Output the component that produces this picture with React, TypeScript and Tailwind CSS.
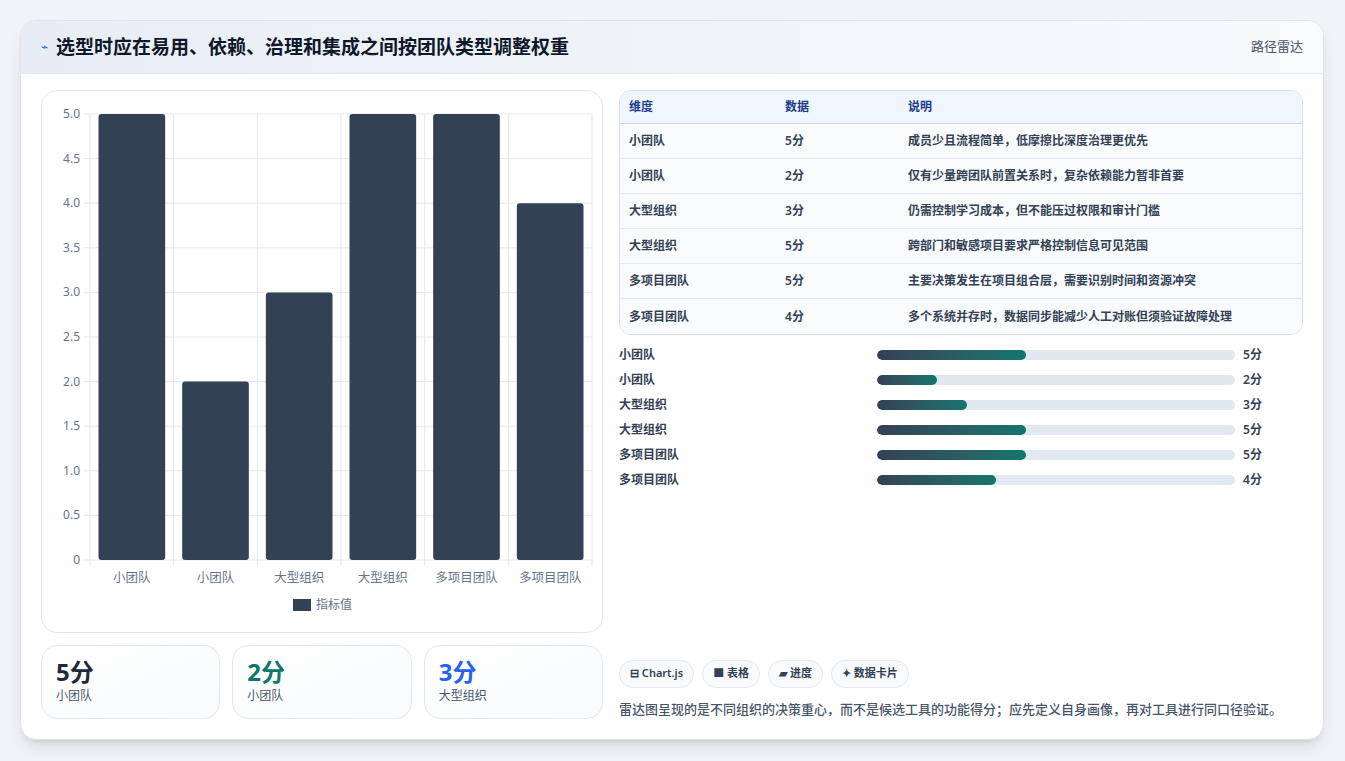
const rows = [
  { k: "小团队", v: 5, d: "成员少且流程简单，低摩擦比深度治理更优先" },
  { k: "小团队", v: 2, d: "仅有少量跨团队前置关系时，复杂依赖能力暂非首要" },
  { k: "大型组织", v: 3, d: "仍需控制学习成本，但不能压过权限和审计门槛" },
  { k: "大型组织", v: 5, d: "跨部门和敏感项目要求严格控制信息可见范围" },
  { k: "多项目团队", v: 5, d: "主要决策发生在项目组合层，需要识别时间和资源冲突" },
  { k: "多项目团队", v: 4, d: "多个系统并存时，数据同步能减少人工对账但须验证故障处理" },
];

function BarChart() {
  const x0 = 48, x1 = 550, y0 = 23, y1 = 469;
  const step = (x1 - x0) / 6;
  const ticks = [0, 0.5, 1, 1.5, 2, 2.5, 3, 3.5, 4, 4.5, 5];
  const yOf = (v: number) => y1 - ((y1 - y0) * v) / 5;
  return (
    <svg width="562" height="543" className="block">
      {ticks.map((t) => (
        <g key={t}>
          <line x1={x0 - 6} x2={x1} y1={yOf(t)} y2={yOf(t)} stroke="#e5e7eb" />
          <text x={x0 - 10} y={yOf(t) + 4} textAnchor="end" fontSize="12" fill="#64748b">
            {t.toFixed(1).replace(".0", t === 0 ? "" : ".0")}
          </text>
        </g>
      ))}
      {Array.from({ length: 7 }).map((_, i) => (
        <line key={i} x1={x0 + i * step} x2={x0 + i * step} y1={y0} y2={y1 + 6} stroke="#e5e7eb" />
      ))}
      {rows.map((r, i) => (
        <g key={i}>
          <rect x={x0 + i * step + 8.5} y={yOf(r.v)} width={step - 17} height={y1 - yOf(r.v)} rx="3" fill="#334155" />
          <text x={x0 + i * step + step / 2} y={491} textAnchor="middle" fontSize="12.5" fill="#64748b">
            {r.k}
          </text>
        </g>
      ))}
      <rect x="251" y="508" width="18" height="12" fill="#334155" />
      <text x="274" y="518" fontSize="12" fill="#64748b">指标值</text>
    </svg>
  );
}

export default function App() {
  const font = { fontFamily: '"Noto Sans", "Noto Sans CJK SC", sans-serif' };
  return (
    <div className="w-[1345px] h-[761px] bg-[#f1f3f6] pt-5 pl-5" style={font}>
      <div className="w-[1304px] h-[720px] bg-white rounded-2xl border border-[#dfe3ea] shadow-lg overflow-hidden flex flex-col">
        <div className="h-[56px] flex items-center justify-between px-5 bg-gradient-to-r from-[#e8edf5] to-[#f8fafc] border-b border-[#e2e8f0]">
          <div className="flex items-center gap-2">
            <span className="text-[#2563eb] text-xs">⌁</span>
            <span className="text-[19px] font-bold text-[#0f172a]">选型时应在易用、依赖、治理和集成之间按团队类型调整权重</span>
          </div>
          <span className="text-[13px] text-[#475569]">路径雷达</span>
        </div>
        <div className="flex flex-1 gap-4 px-5 pt-4 pb-5">
          <div className="w-[562px] flex flex-col gap-3">
            <div className="h-[543px] rounded-2xl border border-[#e2e8f0] overflow-hidden">
              <BarChart />
            </div>
            <div className="flex gap-3">
              {[
                ["5分", "小团队", "text-[#1e293b]"],
                ["2分", "小团队", "text-[#0f766e]"],
                ["3分", "大型组织", "text-[#2563eb]"],
              ].map(([v, l, c], i) => (
                <div key={i} className="flex-1 h-[74px] rounded-2xl border border-[#e2e8f0] bg-gradient-to-br from-white to-[#f8fafc] px-[14px] pt-[10px]">
                  <div className={`text-[24px] font-bold leading-8 ${c}`}>{v}</div>
                  <div className="text-xs text-[#475569]">{l}</div>
                </div>
              ))}
            </div>
          </div>
          <div className="flex-1 flex flex-col">
            <div className="rounded-xl border border-[#d6dee9] overflow-hidden text-xs">
              <div className="flex h-[33px] items-center bg-[#eff6ff] border-b border-[#cbd5e1] text-[#1e3a8a] font-semibold">
                <div className="w-[165px] pl-[9px]">维度</div>
                <div className="w-[123px]">数据</div>
                <div className="flex-1">说明</div>
              </div>
              {rows.map((r, i) => (
                <div key={i} className={`flex h-[35px] items-center bg-[#f8fafc] text-[#334155] font-semibold ${i < 5 ? "border-b border-[#e2e8f0]" : ""}`}>
                  <div className="w-[165px] pl-[9px]">{r.k}</div>
                  <div className="w-[123px]">{r.v}分</div>
                  <div className="flex-1">{r.d}</div>
                </div>
              ))}
            </div>
            <div className="flex flex-col gap-[9px] mt-[12px]">
              {rows.map((r, i) => (
                <div key={i} className="flex items-center h-4 text-xs font-semibold text-[#334155]">
                  <div className="w-[258px]">{r.k}</div>
                  <div className="w-[358px] h-[10px] rounded-full bg-[#e2e8f0] overflow-hidden">
                    <div className="h-full rounded-full bg-gradient-to-r from-[#334155] to-[#0f766e]" style={{ width: `${(r.v / 12) * 100}%` }} />
                  </div>
                  <div className="ml-2">{r.v}分</div>
                </div>
              ))}
            </div>
            <div className="mt-auto flex gap-2 text-[11px] font-semibold text-[#334155]">
              {["⊟ Chart.js", "■ 表格", "▰ 进度", "✦ 数据卡片"].map((c) => (
                <span key={c} className="h-[28px] px-[10px] rounded-full border border-[#e2e8f0] bg-[#f8fafc] flex items-center">{c}</span>
              ))}
            </div>
            <div className="mt-[12px] text-[13px] text-[#475569] font-medium">雷达图呈现的是不同组织的决策重心，而不是候选工具的功能得分；应先定义自身画像，再对工具进行同口径验证。</div>
          </div>
        </div>
      </div>
    </div>
  );
}
